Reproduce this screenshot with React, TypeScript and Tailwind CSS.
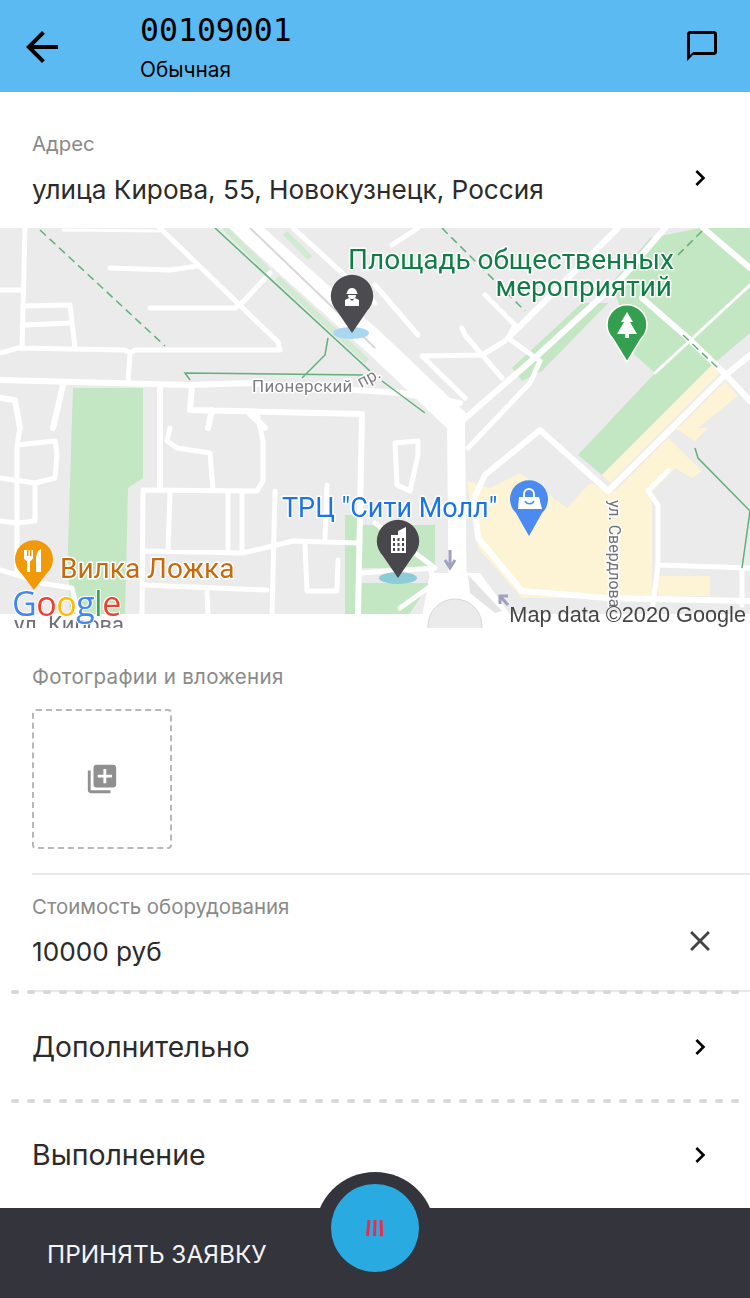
const ROADS: { w: number; d: string }[] = [
  { w: 3, d: "M63 2L160 3" },
  { w: 5, d: "M25 0L22 120M0 62L22 62M25 78L70 77L75 120M22 97L72 95M0 125L18 120L125 122L130 125L135 122L280 122L278 114L160 0M110 40L170 42L198 38M150 80L235 80L240 77L270 45M130 125L128 155" },
  { w: 6, d: "M0 152L190 157L250 155L400 165L460 175M63 157L53 200M0 170L15 172L20 200M160 157L160 262M192 157L190 182L362 186L358 387M212 182L208 200M250 186L265 200" },
  { w: 5, d: "M20 200L17 217L55 213L57 225L55 250L35 255L35 293L17 295M0 250L35 255M17 217L17 345M0 293L17 295M0 342L17 347L40 355L72 360L78 385M170 200L167 213L177 220L210 225L213 262M257 186L263 213L263 253L257 263L143 262L142 387M170 265L168 322M228 265L228 322M242 265L242 322M143 323L243 325L293 313L357 315M275 263L272 387M143 357L267 362M207 363L208 387M305 317L307 363L337 363L338 332M327 257L325 310M395 215L418 213L418 227L410 263L397 257L395 215" },
  { w: 6, d: "M462 193L538 127L622 50L665 0M508 110L618 0M468 283L485 247L540 202L608 263L672 200L722 150L750 127M642 70L688 110L722 143L750 173M703 0L750 40M475 280L478 310L522 363L608 370L750 373" },
  { w: 5, d: "M375 57L418 107M485 67L515 97L508 110L540 133L530 155L468 220M462 100L465 107L502 150M422 128L482 127L505 113M422 128L465 170M418 0L392 17M668 243L648 263L658 277L658 337L650 400M658 337L750 340M742 340L742 377M293 0L375 75M375 295L435 340M360 345L435 340M400 380L435 355M430 340L440 370" },
  { w: 3, d: "M655 145L750 57" },
  { w: 16, d: "M0 394L750 394" },
];

const DOTS = Array.from({ length: 46 }, (_, i) => i);

function Chevron() {
  return (
    <svg className="h-8 w-8 text-black" viewBox="0 0 24 24" fill="currentColor">
      <path d="M10 6L8.59 7.41 13.17 12l-4.58 4.59L10 18l6-6z" />
    </svg>
  );
}

function DottedLine({ className }: { className?: string }) {
  return (
    <div className={`ml-[11px] flex h-1 gap-2 overflow-hidden ${className ?? ""}`}>
      {DOTS.map((i) => (
        <span key={i} className="h-1 w-2 shrink-0 rounded-full bg-[#d9d9d9]" />
      ))}
    </div>
  );
}

export default function App() {
  return (
    <div className="relative flex h-[1298px] w-[750px] flex-col overflow-hidden bg-white font-['Inter',sans-serif] text-[#2b2b2b]">
      <header className="flex h-[92px] items-center bg-[#5cbaf2] text-black">
        <svg className="ml-[18px] mt-[2px] h-12 w-12" viewBox="0 0 24 24" fill="currentColor">
          <path d="M20 11H7.83l5.59-5.59L12 4l-8 8 8 8 1.41-1.41L7.83 13H20v-2z" />
        </svg>
        <div className="ml-[74px] flex flex-1 flex-col pt-[2px]">
          <span className="font-['DejaVu_Sans_Mono',monospace] text-[31.500px] leading-[36px]">00109001</span>
          <span className="mt-[10px] text-[20.800px] leading-[24px]">Обычная</span>
        </div>
        <svg className="mr-[30px] h-9 w-9" viewBox="0 0 24 24" fill="currentColor">
          <path d="M20 2H4c-1.1 0-2 .9-2 2v18l4-4h14c1.1 0 2-.9 2-2V4c0-1.1-.9-2-2-2zm0 14H6l-2 2V4h16v12z" />
        </svg>
      </header>

      <section className="flex h-[136px] justify-between pl-8 pr-[34px] pt-[40px]">
        <div className="flex flex-col">
          <span className="text-[20.300px] leading-[24px] text-[#8a8a8a]">Адрес</span>
          <span className="mt-[18px] text-[26.200px] leading-[32px]">улица Кирова, 55, Новокузнецк, Россия</span>
        </div>
        <div className="mt-[30px]">
          <Chevron />
        </div>
      </section>

      <svg className="h-[400px] w-[750px] shrink-0 blur-[0.4px]" viewBox="0 0 750 400">
        <rect width="750" height="400" fill="#ebebeb" />
        <path d="M73 160L143 160L143 250L128 260L125 387L70 387L68 320Z" fill="#c3e6c3" />
        <path d="M345 287L357 287L357 387L345 387ZM357 297L435 297L435 340L357 340ZM360 355L430 355L400 400L360 400Z" fill="#c3e6c3" />
        <path d="M512 140L582 75L608 75L542 143L522 153ZM635 127L655 145L578 227L602 247L712 137L750 105L750 0L700 0L650 10L612 55Z" fill="#c3e6c3" />
        <path d="M467 253L490 260L520 245L567 280L590 255L608 263L615 263L668 210L702 243L692 250L675 240L652 263L652 370L522 370L478 320Z" fill="#fdf3d5" />
        <path d="M602 247L712 137L722 143L610 255ZM725 153L738 168L698 200L678 200ZM675 200L695 213L708 200ZM658 348L710 348L710 368L658 368Z" fill="#fdf3d5" />
        <g fill="none" stroke="#ffffff" strokeLinecap="round" strokeLinejoin="round">
          {ROADS.map((r, i) => (
            <path key={i} d={r.d} strokeWidth={r.w} />
          ))}
        </g>
        {/* wide avenue and the square at its end */}
        <path d="M235 -10L375 115L462 198" stroke="#ffffff" strokeWidth="24" fill="none" />
        <path d="M456 195L458 400" stroke="#ffffff" strokeWidth="18" fill="none" />
        <path d="M430 345L480 345L520 400L420 400Z" fill="#ffffff" />
        <path d="M468 347L502 383L495 385L470 365Z" fill="#e4e4e4" />
        <circle cx="455" cy="398" r="27" fill="#ebebeb" stroke="#d9d9d9" />
        <path d="M225 0L268 43M277 50L367 133M285 5L310 30" stroke="#d2e9d2" strokeWidth="6" fill="none" />
        <path d="M250 0L375 120" stroke="#d8d8d8" strokeWidth="2" fill="none" />
        <g fill="none" stroke="#5fb07b" strokeWidth="1.5">
          <path d="M40 2L165 118M442 0L525 83M702 3L675 30M683 107L720 142" strokeDasharray="8 5" />
          <path d="M215 0L370 143M382 153L425 185M328 110L325 127L302 150M363 147L185 145L190 152M695 220L698 230L750 283L742 340" />
        </g>
        <path d="M450 322L450 338M445 332L450 340L455 332" stroke="#a0a0c0" strokeWidth="3" fill="none" />
        <path d="M500 368L508 377M500 376L500 368L508 368" stroke="#a0a0c0" strokeWidth="3" fill="none" />

        {/* map labels */}
        <g fontFamily="Roboto, sans-serif" stroke="#ffffff" strokeWidth="3" paintOrder="stroke" strokeLinejoin="round">
          <text x="348" y="41" fontSize="28" fill="#0f7d45">Площадь общественных</text>
          <text x="672" y="68" fontSize="28" fill="#0f7d45" textAnchor="end">мероприятий</text>
          <text x="252" y="164" fontSize="17" fill="#7d7d85" letterSpacing="0.3">Пионерский</text>
          <text x="361" y="160" fontSize="17" fill="#7d7d85" transform="rotate(-28 361 160)">пр.</text>
          <text x="282" y="289" fontSize="27" fill="#1a73e8">ТРЦ "Сити Молл"</text>
          <text x="60" y="350" fontSize="28" fill="#c8690c">Вилка Ложка</text>
          <text x="14" y="404" fontSize="22" fill="#70707a">ул. Кирова</text>
          <text x="609" y="272" fontSize="16" fill="#70707a" transform="rotate(90 609 272)">ул. Свердлова</text>
        </g>

        {/* worker pin */}
        <ellipse cx="351" cy="105" rx="18" ry="6" fill="#a9d6f0" />
        <path d="M352 105L337 83A21.200 21.200 0 1 1 367 83Z" fill="#4b4b50" />
        <path d="M347 65A5 5 0 0 1 357 65L358 66L346 66ZM348 67L356 67A4 4 0 0 1 348 67ZM345 78L345 72L349 70L352 73L355 70L359 72L359 78Z" fill="#ffffff" />
        {/* building pin */}
        <ellipse cx="398" cy="350" rx="19" ry="6" fill="#8ccbd8" />
        <path d="M398 350L383 328A21.200 21.200 0 1 1 413 328Z" fill="#47474c" />
        <path d="M391 325L391 307L398 307L398 303L406 299L406 325Z" fill="#ffffff" />
        <path d="M393 310h2v3h-2zM397.500 310h2v3h-2zM402 310h2v3h-2zM393 315h2v3h-2zM397.500 315h2v3h-2zM402 315h2v3h-2zM393 320h2v3h-2zM397.500 320h2v3h-2zM402 320h2v3h-2z" fill="#47474c" />
        {/* park pin */}
        <path d="M627 134L613 111A20 20 0 1 1 641 111Z" fill="#34a04f" stroke="#ffffff" strokeWidth="1.500" />
        <path d="M627 84L633 94L630 94L637 106L629 106L629 110L625 110L625 106L617 106L624 94L621 94Z" fill="#ffffff" />
        {/* shop pin */}
        <path d="M529 308L516 285A19 19 0 1 1 542 285Z" fill="#4b8af0" />
        <path d="M519 269L539 269L542 281L518 281Z" fill="#ffffff" />
        <path d="M524 269V266A5 5 0 0 1 534 266V269" stroke="#ffffff" strokeWidth="2" fill="none" />
        <path d="M525 273A5 5 0 0 0 534 273" stroke="#4b8af0" strokeWidth="1.500" fill="none" />
        {/* food pin */}
        <path d="M34 362L21 345A19 19 0 1 1 47 345Z" fill="#f09a0a" />
        <path d="M24 322v7a4 4 0 0 0 3 4v11h3v-11a4 4 0 0 0 3-4v-7h-1.500v6h-1.500v-6h-1.500v6h-1.500v-6ZM36 344v-12c0-6 2-10 5-11v23Z" fill="#ffffff" />

        <text x="12" y="388" fontFamily="'Open Sans', sans-serif" fontSize="34" fontWeight="500" letterSpacing="-0.500" stroke="#ffffff" strokeWidth="2" paintOrder="stroke">
          <tspan fill="#4285f4">G</tspan>
          <tspan fill="#ea4335">o</tspan>
          <tspan fill="#fbbc05">o</tspan>
          <tspan fill="#4285f4">g</tspan>
          <tspan fill="#34a853">l</tspan>
          <tspan fill="#ea4335">e</tspan>
        </text>
        <text x="746" y="394" textAnchor="end" fontFamily="'Liberation Sans', sans-serif" fontSize="21.700" fill="#444444">Map data ©2020 Google</text>
      </svg>

      <section className="flex h-[246px] flex-col px-8 pt-[36px]">
        <span className="text-[20.500px] leading-[26px] tracking-[0.3px] text-[#8a8a8a]">Фотографии и вложения</span>
        <div className="mt-[19px] flex h-[140px] w-[140px] items-center justify-center rounded-[4px] border-2 border-dashed border-[#b8b8b8]">
          <svg className="h-[34px] w-[34px] text-[#909090]" viewBox="0 0 24 24" fill="currentColor">
            <path d="M4 6H2v14c0 1.100.9 2 2 2h14v-2H4V6zm16-4H8c-1.100 0-2 .9-2 2v12c0 1.100.9 2 2 2h12c1.100 0 2-.9 2-2V4c0-1.100-.9-2-2-2zm-1 9h-4v4h-2v-4H9V9h4V5h2v4h4v2z" />
          </svg>
        </div>
      </section>

      <section className="-mt-px ml-8 flex h-[119px] justify-between border-y-2 border-[#e8e8e8] pr-[33px] pt-[20px]">
        <div className="flex flex-col">
          <span className="text-[20.400px] leading-[24px] text-[#8a8a8a]">Стоимость оборудования</span>
          <span className="mt-[17px] text-[26.200px] leading-[32px]">10000 руб</span>
        </div>
        <svg className="mt-[29px] h-[34px] w-[34px] text-[#444444]" viewBox="0 0 24 24" fill="currentColor">
          <path d="M19 6.410L17.590 5 12 10.590 6.410 5 5 6.410 10.590 12 5 17.590 6.410 19 12 13.410 17.590 19 19 17.590 13.410 12z" />
        </svg>
      </section>

      <DottedLine className="-mt-[2px]" />
      <div className="flex h-[105px] items-center justify-between pl-8 pr-[34px]">
        <span className="text-[28.200px] leading-[36px]">Дополнительно</span>
        <Chevron />
      </div>
      <DottedLine />
      <div className="flex h-[104px] items-center justify-between pl-8 pr-[34px]">
        <span className="text-[28.500px] leading-[36px]">Выполнение</span>
        <Chevron />
      </div>

      <footer className="mt-auto flex h-[90px] items-center bg-[#33343c] pl-[47px] pt-[2px]">
        <span className="text-[24.400px] leading-[30px] text-[#f4f4f4]">ПРИНЯТЬ ЗАЯВКУ</span>
      </footer>

      <div className="absolute left-[315px] top-[1172px] flex h-[120px] w-[120px] justify-center rounded-full bg-[#33343c] pt-3">
        <div className="flex h-[88px] w-[88px] items-center justify-center rounded-full bg-[#29abe2]">
          <svg className="h-[18px] w-[20px]" viewBox="0 0 20 18" fill="#f0284a">
            <path d="M2.500 1L5.500 1.200L4 17L1 17ZM8.500 1L11.500 1L11 17L8 17ZM14.500 1.200L17.500 1L18 17L15 17.500Z" />
          </svg>
        </div>
      </div>
    </div>
  );
}
